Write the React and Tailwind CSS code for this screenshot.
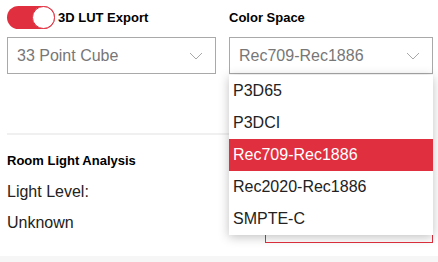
import React, { useState } from 'react';

const options = ['P3D65', 'P3DCI', 'Rec709-Rec1886', 'Rec2020-Rec1886', 'SMPTE-C'];

const Chevron = () => (
  <svg width="14" height="8" viewBox="0 0 14 8" fill="none" stroke="#a8a8a8" strokeWidth="1">
    <path d="M1 1l6 6 6-6" />
  </svg>
);

const Select = ({ value }) => (
  <div className="flex items-center justify-between h-[37px] border border-[#a9a9a9] bg-white pl-[9px] pr-[12px]">
    <span className="text-[16px] text-[#777]">{value}</span>
    <Chevron />
  </div>
);

const App = () => {
  const [lut, setLut] = useState(true);
  const selected = 'Rec709-Rec1886';

  return (
    <div className="relative w-[438px] h-[262px] bg-white overflow-hidden" style={{ fontFamily: '"Liberation Sans", Arial, sans-serif' }}>
      <div className="pl-[7px] pr-[5px] pt-[6px]">
        <div className="grid grid-cols-[209px_204px] gap-x-[13px]">
          <div>
            <div className="flex items-center gap-[3px] h-[23px]">
              <button
                type="button"
                onClick={() => setLut(!lut)}
                className="relative w-[48px] h-[23px] rounded-full bg-[#e0303f]"
              >
                <span className="absolute right-0 top-0 w-[23px] h-[23px] rounded-full bg-white border-[1.5px] border-[#e0303f]" />
              </button>
              <span className="text-[13px] font-bold text-black">3D LUT Export</span>
            </div>
            <div className="mt-[8px]">
              <Select value="33 Point Cube" />
            </div>
          </div>
          <div>
            <div className="flex items-center h-[23px]">
              <span className="text-[13px] font-bold text-black">Color Space</span>
            </div>
            <div className="mt-[8px]">
              <Select value={selected} />
            </div>
          </div>
        </div>

        <div className="mt-[59px] h-[2px] bg-[#f0f0f0]" />

        <div className="grid grid-cols-[209px_204px] gap-x-[13px]">
          <div>
            <div className="mt-[18px] text-[13px] font-bold text-black leading-[16px]">Room Light Analysis</div>
            <div className="mt-[14px] text-[16px] text-[#222] leading-[18px]">Light Level:</div>
            <div className="mt-[13px] text-[16px] text-[#222] leading-[18px]">Unknown</div>
          </div>
          <div className="flex justify-end pt-[70px]">
            <div className="w-[168px] h-[38px] border border-[#e0303f]" />
          </div>
        </div>
      </div>

      <div className="absolute left-0 right-0 bottom-0 h-[6px] bg-[#f6f6f6]" />

      <div className="absolute left-[229px] top-[75px] w-[204px] bg-white shadow-[0_2px_10px_rgba(0,0,0,0.25)]">
        {options.map((o) => (
          <div
            key={o}
            className={`h-[32px] flex items-center pl-[4px] text-[16px] ${o === selected ? 'bg-[#e0303f] text-white' : 'text-[#222]'}`}
          >
            {o}
          </div>
        ))}
      </div>
    </div>
  );
};

export default App;
